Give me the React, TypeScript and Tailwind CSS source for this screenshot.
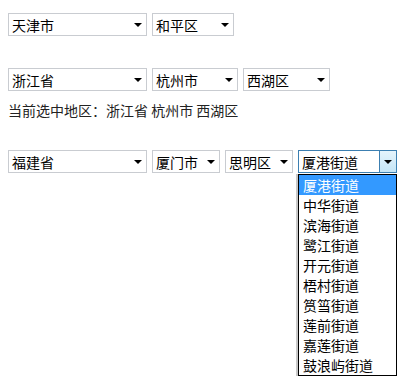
import React from "react";

const font = { fontFamily: '"Noto Sans CJK SC", "Noto Sans", sans-serif' };

// one closed select box, drawn like the old windows control
const FakeSelect = ({ text, w }: { text: string; w: string }) => (
  <div
    className={`${w} h-[23px] border border-[#c9ccd1] bg-white flex items-center justify-between pl-[3px] pr-[4px] text-[14px] leading-none text-black`}
  >
    <span>{text}</span>
    <span className="w-0 h-0 border-l-[4px] border-r-[4px] border-t-[4px] border-l-transparent border-r-transparent border-t-black" />
  </div>
);

const streets = [
  "厦港街道",
  "中华街道",
  "滨海街道",
  "鹭江街道",
  "开元街道",
  "梧村街道",
  "筼筜街道",
  "莲前街道",
  "嘉莲街道",
  "鼓浪屿街道",
];

export default function App() {
  return (
    <div className="w-[407px] h-[392px] bg-white pl-[8px] pt-[13px]" style={font}>
      <div className="flex gap-[5px]">
        <FakeSelect text="天津市" w="w-[139px]" />
        <FakeSelect text="和平区" w="w-[82px]" />
      </div>

      <div className="flex gap-[5px] mt-[32px]">
        <FakeSelect text="浙江省" w="w-[139px]" />
        <FakeSelect text="杭州市" w="w-[86px]" />
        <FakeSelect text="西湖区" w="w-[87px]" />
      </div>
      <div className="mt-[9px] text-[14px] leading-[20px] text-[#222]">
        当前选中地区：浙江省 杭州市 西湖区
      </div>

      <div className="flex gap-[5px] mt-[30px]">
        <FakeSelect text="福建省" w="w-[139px]" />
        <FakeSelect text="厦门市" w="w-[68px]" />
        <FakeSelect text="思明区" w="w-[68px]" />
        {/* open one */}
        <div className="relative">
          <div className="w-[99px] h-[23px] border border-[#3c7fb1] bg-white flex items-stretch text-[14px] leading-none text-black">
            <span className="flex-1 flex items-center pl-[3px]">厦港街道</span>
            <span className="w-[17px] border-l border-[#3c7fb1] bg-gradient-to-b from-[#e5f4fc] to-[#c4e5f6] flex items-center justify-center">
              <span className="w-0 h-0 border-l-[4px] border-r-[4px] border-t-[4px] border-l-transparent border-r-transparent border-t-black" />
            </span>
          </div>
          <div className="absolute left-0 top-[24px] w-[99px] border border-black bg-white shadow-[-2px_0_0_#c8c8c8]">
            {streets.map((s, i) => (
              <div
                key={s}
                className={`h-[20px] pl-[4px] flex items-center text-[14px] leading-none ${
                  i === 0 ? "bg-[#3399ff] text-white" : "text-black"
                }`}
              >
                {s}
              </div>
            ))}
          </div>
        </div>
      </div>
    </div>
  );
}
